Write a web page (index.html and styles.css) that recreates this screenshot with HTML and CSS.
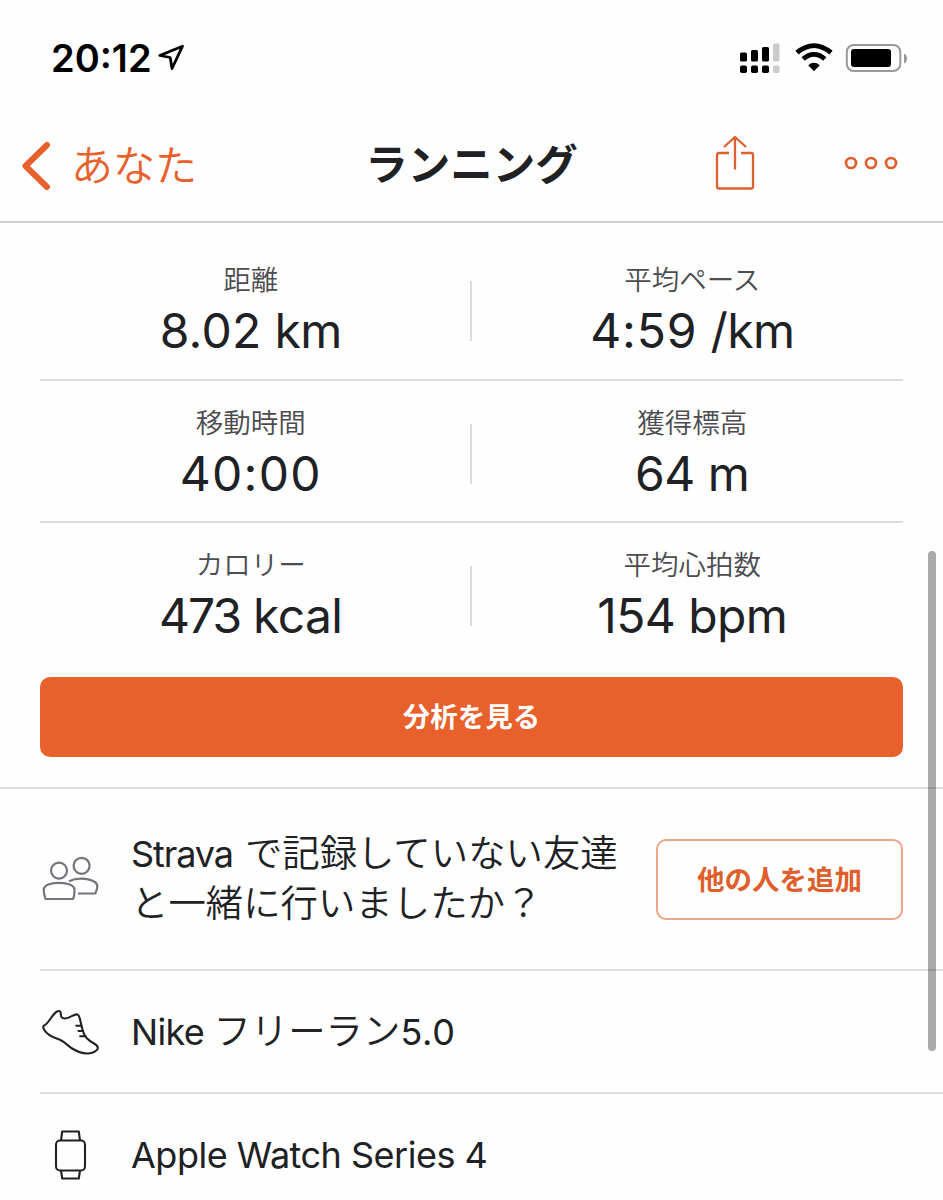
FILE: index.html
```html
<!DOCTYPE html>
<html lang="ja">
<head>
<meta charset="utf-8">
<title>ランニング</title>
<link rel="stylesheet" href="styles.css">
</head>
<body>
<div class="screen">
  <header class="status">
    <div class="clock">20:12</div>
    <svg class="location" width="27" height="27" viewBox="0 0 27 27"><path d="M24.500 2.200 1.800 11.500 12.200 13.500 14 24.500Z" fill="none" stroke="#000" stroke-width="2.800" stroke-linejoin="round"/></svg>
    <svg class="signals" width="170" height="32" viewBox="0 0 170 32">
      <g fill="#000"><rect x="0" y="10.5" width="7" height="9" rx="1.5"/><rect x="11" y="8" width="7" height="11.5" rx="1.5"/><rect x="22" y="5" width="7" height="14.5" rx="1.5"/><rect x="0" y="23.5" width="7" height="7.5" rx="1.8"/><rect x="11" y="23.5" width="7" height="7.5" rx="1.8"/><rect x="22" y="23.5" width="7" height="7.5" rx="1.8"/></g>
      <g fill="#cbcbcb"><rect x="33" y="1.5" width="6.5" height="18" rx="1.5"/><rect x="33" y="23.5" width="6.5" height="7.5" rx="1.8"/></g>
      <g fill="none" stroke="#000" stroke-width="5"><path d="M57 10.7C68 1.3 80 1.3 91 10.7"/><path d="M63.2 17C70 11 78 11 84.800 17"/></g>
      <path d="M68.2 23.2Q74 18.5 79.8 23.2L74 29.3Z"/>
      <rect x="106.8" y="3" width="53.5" height="26" rx="7" fill="none" stroke="#999" stroke-width="2"/>
      <rect x="111" y="7" width="40" height="18" rx="3" fill="#000"/>
      <path d="M164 11.5Q167 13 167 16.5T164 21.5Z" fill="#999"/>
    </svg>
  </header>

  <nav class="nav">
    <div class="back">
      <svg width="30" height="50" viewBox="0 0 30 50"><path d="M26 4 4.5 25 26 46" fill="none" stroke="#e8602c" stroke-width="6" stroke-linecap="round" stroke-linejoin="round"/></svg>
      <span class="back-label">あなた</span>
    </div>
    <h1 class="title">ランニング</h1>
    <div class="actions">
      <svg width="40" height="56" viewBox="0 0 40 56" fill="none" stroke="#dc6030" stroke-width="2.3"><path d="M14 18H4Q2 18 2 20V51.5Q2 53.5 4 53.5H36Q38 53.5 38 51.5V20Q38 18 36 18H26"/><path d="M20 34.5V2M9 12 20 2 31 12" stroke-linejoin="round"/></svg>
      <svg width="54" height="14" viewBox="0 0 54 14" fill="none" stroke="#df5e2c" stroke-width="2.7"><circle cx="7" cy="7" r="5"/><circle cx="27" cy="7" r="5"/><circle cx="47" cy="7" r="5"/></svg>
    </div>
  </nav>

  <main>
    <section class="stats">
      <div class="stat-row">
        <div class="stat"><div class="label">距離</div><div class="value dist"><span>8.02</span> km</div></div>
        <div class="stat"><div class="label">平均ペース</div><div class="value pace"><span>4:59</span> /km</div></div>
      </div>
      <div class="stat-row">
        <div class="stat"><div class="label">移動時間</div><div class="value time">40:00</div></div>
        <div class="stat"><div class="label">獲得標高</div><div class="value elev"><span>64</span> m</div></div>
      </div>
      <div class="stat-row">
        <div class="stat"><div class="label">カロリー</div><div class="value kcal"><span>473</span> kcal</div></div>
        <div class="stat"><div class="label">平均心拍数</div><div class="value bpm"><span>154</span> bpm</div></div>
      </div>
      <div class="analyze">分析を見る</div>
    </section>

    <section class="list">
      <div class="row friends">
        <svg class="icon" width="60" height="48" viewBox="0 0 60 48" fill="none" stroke="#75737d" stroke-width="2.2" stroke-linejoin="round"><circle cx="19" cy="15.600" r="8"/><circle cx="41.600" cy="10.800" r="8"/><path d="M5.500 44C4.300 41 3.700 37 3.700 34Q4.500 31 9 29.200Q19 26.500 29 29.200Q34 31 34.500 34C34.500 38 34 42 33 44Z"/><path d="M29 26.200Q34 23.700 41 23.700 49 23.700 54 26.500 57.300 28.200 57.300 31.200 57 35.500 55.300 38.500H38"/></svg>
        <p class="text question"><span class="strava">Strava</span> <span class="jp">で記録していない友達<br>と一緒に行いましたか？</span></p>
        <div class="add">他の人を追加</div>
      </div>
      <div class="row shoe">
        <svg class="icon" width="60" height="48" viewBox="0 0 60 48" fill="none" stroke="#202124" stroke-width="2.1" stroke-linejoin="round" stroke-linecap="round"><path d="M4 17.500C9 15.500 12 6 17 3.500Q20.300 2 20.700 5C21 8.500 20.800 10.500 25 10.500 30 10.500 34 5.500 37.500 6.500 40.500 7.500 40 14 42.700 22.300 44.500 29.500 48 32 54 35.500 60 39 58.500 42 53 44.500 47 46.500 40 45.500 31.300 40 26 36 23 32.500 18 31 10 28.500 6 25 4 21.500Q2.500 18.500 4 17.500Z"/><path d="M36.300 17.700H41.300M38.500 23H43M40.200 28.200H45.500"/></svg>
        <p class="text nike">Nike <span class="jp">フリーラン</span><span class="version">5.0</span></p>
      </div>
      <div class="row watch">
        <svg class="icon" width="60" height="52" viewBox="0 0 60 52" fill="none" stroke="#202124" stroke-width="2.1" stroke-linejoin="round"><rect x="16" y="11.500" width="29" height="30" rx="4"/><path d="M21 11.500 22.200 2.500H38.800L40 11.500M21 41.500 22.200 49.500H38.800L40 41.500"/></svg>
        <p class="text device">Apple Watch Series 4</p>
      </div>
    </section>
  </main>
  <div class="scrollbar"></div>
</div>
</body>
</html>
```
FILE: styles.css
```css
* { box-sizing: border-box; }
body { margin: 0; background: #fefefe; color: #202124; font-family: Inter, "Noto Sans CJK JP", sans-serif; }
.screen { position: relative; width: 943px; height: 1200px; overflow: hidden; display: flex; flex-direction: column; }

.status { height: 106px; flex: none; display: flex; align-items: flex-start; padding: 38px 33px 0 51px; color: #000; }
.clock { font-size: 38px; line-height: 40px; font-weight: 600; width: 107px; white-space: nowrap; }
.location { margin-top: 6px; }
.signals { margin: 4px 0 0 auto; }

.nav { height: 117px; flex: none; display: grid; grid-template-columns: 300px 1fr 300px; align-items: center; border-bottom: 2px solid #cfcfcf; padding-top: 2px; }
.back { display: flex; align-items: center; gap: 20px; padding-left: 21px; color: #e8602c; }
.back svg { margin-top: 2px; }
.back-label { font-size: 42px; line-height: 50px; font-weight: 350; font-family: "Noto Sans CJK JP", sans-serif; margin-top: -3px; }
.title { margin: -5px 0 0; text-align: center; font-size: 42.500px; line-height: 50px; font-weight: 700; white-space: nowrap; font-family: "Noto Sans CJK JP", sans-serif; }
.actions { display: flex; align-items: center; justify-content: space-between; padding: 0 45px 3px 72px; }

.stats { padding: 15px 40px 30px; height: 566px; border-bottom: 2px solid #dcdddf; }
.stat-row { height: 142.500px; display: grid; grid-template-columns: 1fr 1fr; border-bottom: 2px solid #dcdddf; padding-top: 22px; }
.stat-row:nth-child(3) { border-bottom: 0; height: 138px; }
.stat { text-align: center; }
.stat:first-child { background: linear-gradient(#dcdcde, #dcdcde) right -1px top 21px / 3px 60px no-repeat; padding-right: 10px; }
.stat:last-child { padding-left: 10px; }
.label { font-size: 27.500px; line-height: 36px; color: #4c4c50; font-weight: 350; font-family: "Noto Sans CJK JP", sans-serif; }
.value { font-size: 48px; line-height: 56px; margin-top: 7px; white-space: nowrap; }
.dist, .pace { letter-spacing: -.6px; }
.dist span { letter-spacing: .3px; }
.pace span { letter-spacing: .9px; }
.time { letter-spacing: 1.300px; }
.elev { letter-spacing: -.5px; }
.kcal, .bpm { letter-spacing: -.6px; }
.kcal span { letter-spacing: -2px; }
.analyze { height: 80px; margin-top: 16px; border-radius: 10px; background: #e8602c; color: #fff; font-size: 27.500px; font-weight: 700; line-height: 76px; text-align: center; font-family: "Noto Sans CJK JP", sans-serif; }

.row { display: flex; align-items: center; margin-left: 40px; border-bottom: 2px solid #dedee2; }
.friends { height: 182px; padding-right: 40px; }
.shoe { height: 123px; }
.watch { height: 121px; border: 0; }
.icon { flex: none; margin-right: 31px; }
.text { margin: 0; font-size: 36px; line-height: 50px; white-space: nowrap; }
.jp { font-size: 37.400px; font-weight: 350; font-family: "Noto Sans CJK JP", sans-serif; line-height: 1; }
.strava { letter-spacing: -1.100px; margin-right: 2px; }
.nike { letter-spacing: -.7px; }
.nike .jp { letter-spacing: 0; }
.version { letter-spacing: .8px; }
.device { letter-spacing: -.500px; }
.add { margin-left: auto; width: 247px; height: 81px; border: 2px solid #eda489; border-radius: 10px; color: #df5e2c; font-size: 27.500px; line-height: 75px; font-weight: 700; text-align: center; font-family: "Noto Sans CJK JP", sans-serif; }
.scrollbar { position: absolute; left: 928px; top: 551px; width: 8px; height: 500px; border-radius: 4px; background: rgba(0,0,0,.33); }
```
